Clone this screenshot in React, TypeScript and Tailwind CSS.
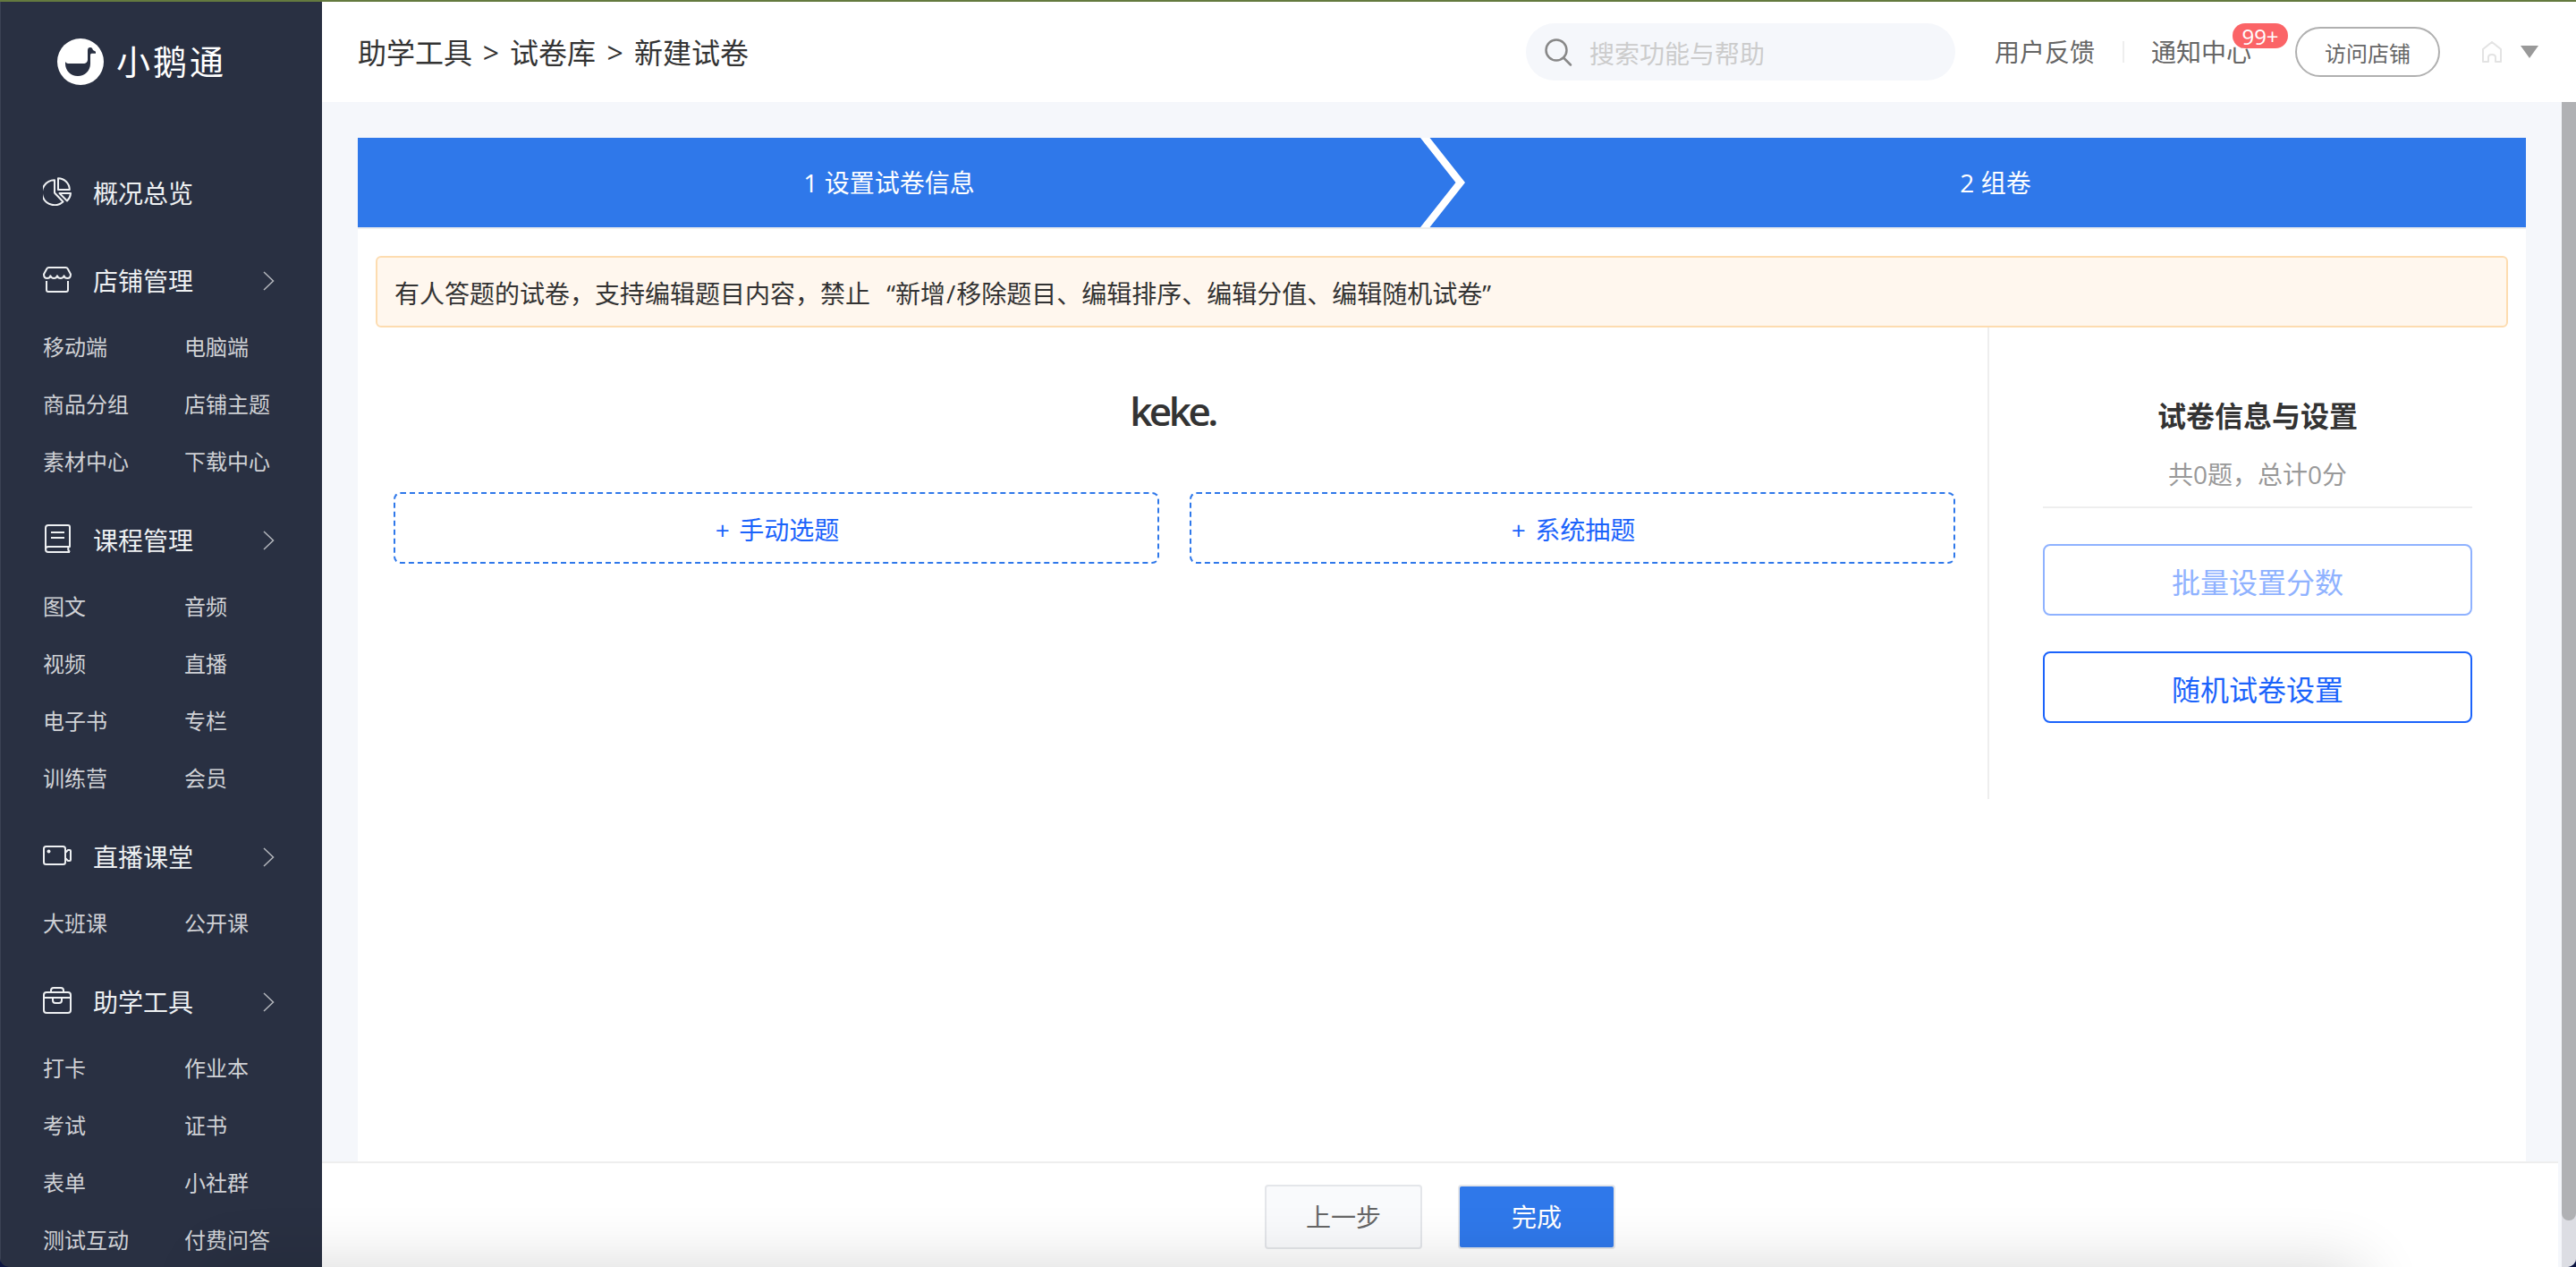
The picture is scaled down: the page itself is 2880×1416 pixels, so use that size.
import type { ReactNode } from "react";
import { twMerge } from "tailwind-merge";

type MenuGroup = {
  title: string;
  icon: ReactNode;
  items: string[];
};

const iconProps = {
  width: 32,
  height: 32,
  viewBox: "0 0 32 32",
  fill: "none",
  stroke: "currentColor",
  strokeWidth: 2,
  strokeLinejoin: "round",
} as const;

const PieIcon = () => (
  <svg {...iconProps}>
    <path d="M13 3.2A14 14 0 1 0 22.5 27.5L13 17.5Z" />
    <path d="M17 1.2V14H29.8A13 13 0 0 0 17 1.2Z" />
    <path d="M18.5 18H31A13 13 0 0 1 27 26.5Z" />
  </svg>
);

const ShopIcon = () => (
  <svg {...iconProps}>
    <path d="M6.5 3H25.5Q27 3 27.8 4.5L31 10.5C31 14 29 15 27.3 15S24 14 23.6 12.2C23 14 21.5 15 19.8 15S16.5 14 16 12.2C15.5 14 14 15 12.2 15S9 14 8.4 12.2C8 14 6.5 15 4.7 15S1 14 1 10.5L4.2 4.5Q5 3 6.5 3Z" />
    <path d="M4 18V28Q4 30 6 30H26Q28 30 28 28V18" />
  </svg>
);

const BookIcon = () => (
  <svg {...iconProps}>
    <path d="M30 31H6Q3 31 3 28V4Q3 1 6 1H28Q30 1 30 3V25H6Q3 25 3 28" />
    <path d="M29 25Q27 28 30 31M9 9H24M9 15H24" />
  </svg>
);

const CameraIcon = () => (
  <svg {...iconProps}>
    <rect x="1" y="6" width="24" height="20" rx="2.5" />
    <path d="M25 13L28 10H30Q31 10 31 11V21Q31 22 30 22H28L25 19" />
    <circle cx="6.5" cy="11.5" r="2" fill="currentColor" stroke="none" />
  </svg>
);

const BriefcaseIcon = () => (
  <svg {...iconProps}>
    <rect x="1" y="7" width="30" height="23" rx="3" />
    <path d="M9 7V5Q9 2 12 2H20Q23 2 23 5V7M1 13H31M11 13V16Q11 19 14 19H18Q21 19 21 16V13" />
  </svg>
);

const menu: MenuGroup[] = [
  { title: "概况总览", icon: <PieIcon />, items: [] },
  {
    title: "店铺管理",
    icon: <ShopIcon />,
    items: ["移动端", "电脑端", "商品分组", "店铺主题", "素材中心", "下载中心"],
  },
  {
    title: "课程管理",
    icon: <BookIcon />,
    items: ["图文", "音频", "视频", "直播", "电子书", "专栏", "训练营", "会员"],
  },
  { title: "直播课堂", icon: <CameraIcon />, items: ["大班课", "公开课"] },
  {
    title: "助学工具",
    icon: <BriefcaseIcon />,
    items: ["打卡", "作业本", "考试", "证书", "表单", "小社群", "测试互动", "付费问答"],
  },
];

const Logo = () => (
  <div className="flex h-[133px] shrink-0 items-center pl-[63px]">
    <svg width="52" height="52" viewBox="0 0 52 52">
      <circle cx="26" cy="26" r="26" fill="#fff" />
      <path
        d="M9 26C10 27.8 11.5 28 14 28H29C32.5 28 34 26.5 34 23V13.5C34 11 35 10 36.8 10C38.8 10 39.3 11 40 13L43 14.8V16.8H38.5C37.3 17 37 18 37 19.5V28C37 36 31 42 23 42C15 42 9 36 9 28Z"
        fill="#293042"
      />
    </svg>
    <div className="-mt-0.5 ml-3.5 text-[38px] leading-[52px] tracking-[3px] text-white">
      小鹅通
    </div>
  </div>
);

const Sidebar = () => (
  <aside className="flex w-[360px] shrink-0 flex-col overflow-hidden border-l border-[#3a4154] bg-[#293042]">
    <Logo />
    <nav className="pt-[25px]">
      {menu.map((group) => (
        <div key={group.title} className="pl-[47px]">
          <div className="mt-3.5 flex h-[84px] items-center text-[#eef0f2]">
            <div className="mb-1">{group.icon}</div>
            <div className="ml-6 w-[190px] text-[28px] leading-10">
              {group.title}
            </div>
            {group.items.length > 0 && (
              <svg width="14" height="22" viewBox="0 0 14 22" fill="none">
                <path d="M1 1L11.5 11L1 21" stroke="#b4b7bd" strokeWidth="1.5" />
              </svg>
            )}
          </div>
          <div className="grid grid-cols-[158px_154px] text-2xl text-[#cfd1d5]">
            {group.items.map((item) => (
              <div key={item} className="flex h-16 items-center">
                {item}
              </div>
            ))}
          </div>
        </div>
      ))}
    </nav>
  </aside>
);

const Header = () => (
  <header className="flex h-28 shrink-0 items-center bg-white pl-10 text-[28px] text-[#666]">
    <div className="flex w-[1306px] pt-px text-[32px] leading-[48px] text-[#333]">
      <span>助学工具</span>
      <span className="w-[42px] text-center">&gt;</span>
      <span>试卷库</span>
      <span className="w-[43px] text-center">&gt;</span>
      <span>新建试卷</span>
    </div>
    <div className="flex h-16 w-[480px] items-center rounded-full bg-[#f5f7fb] pl-5 text-[#ccc]">
      <svg width="34" height="34" viewBox="0 0 34 34" fill="none" stroke="#888" strokeWidth="2.5">
        <circle cx="14" cy="15" r="11.5" />
        <path d="M22 23.5L30 31.5" strokeLinecap="round" />
      </svg>
      <span className="ml-[17px] pt-[3px]">搜索功能与帮助</span>
    </div>
    <span className="ml-11 w-[143px]">用户反馈</span>
    <span className="h-6 w-0.5 bg-[#eee]" />
    <div className="relative ml-[30px] w-[161px]">
      通知中心
      <span className="absolute -top-[11px] left-[91px] flex h-7 w-[62px] items-center justify-center rounded-full bg-[#fb6467] pt-0.5 text-2xl text-white">
        99+
      </span>
    </div>
    <div className="flex h-14 w-[162px] items-center justify-center rounded-full border-2 border-[#b0b0b0] pt-[3px] text-2xl">
      访问店铺
    </div>
    <svg className="ml-[46px]" width="24" height="26" viewBox="0 0 24 26" fill="none" stroke="#e3e3e3" strokeWidth="2">
      <path
        d="M2 10L12 2L22 10V24H16V19Q16 16 12 16T8 19V24H2Z"
        strokeLinejoin="round"
      />
    </svg>
    <svg className="ml-5" width="20" height="14" viewBox="0 0 20 14">
      <path d="M0 0H20L10 14Z" fill="#999" />
    </svg>
  </header>
);

const Steps = () => (
  <div className="flex h-[102px] shrink-0 border-b-2 border-[#eee] bg-[#2f78ea] text-[28px] text-white">
    <div className="flex w-[1188px] items-center justify-center">
      1 设置试卷信息
    </div>
    <svg width="50" height="100" viewBox="0 0 50 100">
      <path d="M0 0H10.5L50 50L10.5 100H0L39.5 50Z" fill="#fff" />
    </svg>
    <div className="flex flex-1 items-center justify-center">2 组卷</div>
  </div>
);

const PickButton = ({ label }: { label: string }) => (
  <button className="h-20 w-[856px] rounded-lg border-2 border-dashed border-[#2f78ea] pt-1 pl-0.5 text-[28px] text-[#1b63fb]">
    <span className="mr-[3px]">+</span> {label}
  </button>
);

const SettingButton = ({ label, disabled }: { label: string; disabled?: boolean }) => (
  <button
    className={twMerge(
      "mt-10 flex h-20 items-center justify-center rounded-lg border-2 pt-1.5 text-[32px]",
      "border-[#1b63fb] text-[#1b63fb]",
      disabled && "border-[#8fb2ff] text-[#8fb2ff]"
    )}
  >
    {label}
  </button>
);

const Notice = () => (
  <div className="mx-5 mt-[30px] flex h-20 shrink-0 items-center rounded-md border-2 border-[#fddcb0] bg-[#fff7ee] pt-1 pl-[19px] text-[28px]">
    有人答题的试卷，支持编辑题目内容，禁止
    <span className="w-7 text-right">“</span>
    新增<span className="mx-px">/</span>
    移除题目、编辑排序、编辑分值、编辑随机试卷”
  </div>
);

const Paper = () => (
  <main className="flex min-h-0 flex-1 bg-[#f5f7fb] pl-10">
    <div className="mt-10 flex w-[2424px] flex-col bg-white text-[#333]">
      <Steps />
      <Notice />
      <div className="flex">
        <section className="flex w-[1822px] flex-col items-center">
          <h1 className="mt-[63px] text-[44px] leading-[60px] font-semibold tracking-[-3.5px]">
            keke.
          </h1>
          <div className="mt-[61px] flex gap-[34px] pl-1">
            <PickButton label="手动选题" />
            <PickButton label="系统抽题" />
          </div>
        </section>
        <section className="flex h-[527px] w-[542px] flex-col border-l-2 border-[#eee] pl-[60px] text-center">
          <h2 className="mt-[75px] text-[32px] leading-[48px] font-bold">试卷信息与设置</h2>
          <p className="mt-[21px] h-[58px] border-b-2 border-[#eee] text-[28px] leading-10 text-[#999]">
            共0题，总计0分
          </p>
          <SettingButton label="批量设置分数" disabled />
          <SettingButton label="随机试卷设置" />
        </section>
      </div>
    </div>
  </main>
);

const Footer = () => (
  <footer className="flex h-[118px] shrink-0 justify-center gap-10 border-t-2 border-[#eee] bg-white pt-6 text-[28px]">
    <button className="h-[72px] w-44 rounded border-2 border-[#e4e6ea] bg-[#f9fafc] text-[#666]">
      上一步
    </button>
    <button className="h-[72px] w-44 rounded border-2 border-[#e4e6ea] bg-[#2f78ea] text-white">
      完成
    </button>
  </footer>
);

const App = () => {
  return (
    <div className="bg-[#0b1440]">
      <div className="relative flex h-[1416px] w-[2880px] flex-col overflow-hidden rounded-b-[10px] border-t-2 border-[#647a3f] font-['Open_Sans','Noto_Sans_CJK_SC',sans-serif]">
        <div className="flex min-h-0 flex-1">
          <Sidebar />
          <div className="flex flex-1 flex-col">
            <Header />
            <div className="flex min-h-0 flex-1 bg-[#f5f7fb]">
              <div className="flex w-[2500px] flex-col">
                <Paper />
                <Footer />
              </div>
              {/* scrollbar */}
              <div className="ml-1 w-4 bg-[#dcdde3]">
                <div className="h-[1250px] rounded-b-full bg-[#b0b1b4]" />
              </div>
            </div>
          </div>
        </div>
        {/* soft shade rising from the bottom edge */}
        <div className="pointer-events-none absolute top-full left-[240px] h-40 w-[2400px] shadow-[0_0_70px_rgba(0,0,0,0.16)]" />
      </div>
    </div>
  );
};

export default App;
